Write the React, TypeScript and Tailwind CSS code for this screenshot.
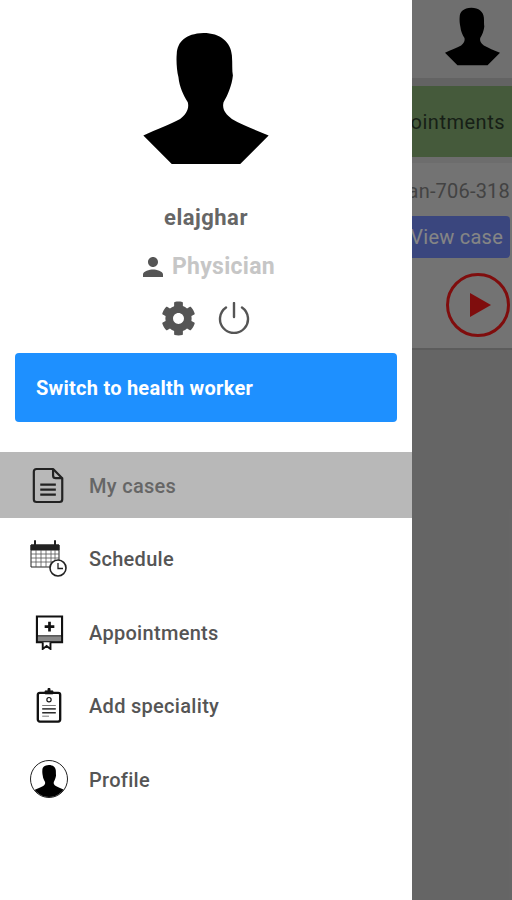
import { FaCog } from "react-icons/fa";
import { MdPerson } from "react-icons/md";

const BUST =
  "M70 345C110 325 150 312 180 295C198 282 208 265 203 245C190 225 178 200 175 170C170 150 168 120 170 100C172 65 195 40 250 38C300 38 332 65 335 105C337 130 335 150 338 165C335 195 322 225 310 245C305 265 315 280 335 295C365 312 405 328 445 345L360 430L155 430Z";

const Bust = ({ className }: { className: string }) => (
  <svg viewBox="70 38 375 392" className={className} fill="#000">
    <path d={BUST} />
  </svg>
);

const DocIcon = () => (
  <svg viewBox="0 0 36 40" className="w-[33px] h-[37px] mr-[2px]" fill="none" stroke="#222" strokeWidth="2.400">
    <path d="M5 2H23L33 12V35Q33 38 30 38H5Q2 38 2 35V5Q2 2 5 2Z" strokeLinejoin="round" />
    <path d="M23 2V9Q23 12 26 12H33" />
    <path d="M9 19H26M9 24.500H26M9 30H26" />
  </svg>
);

const CalendarIcon = () => (
  <svg viewBox="0 0 38 38" className="w-[38px] h-[38px]" fill="none" stroke="#222">
    <path d="M1 5H29V27H1Z" strokeWidth="1" />
    <path d="M1 5H29V10H1Z" fill="#222" strokeWidth="1" />
    <path d="M5 1V8M25 1V8" strokeWidth="2" strokeLinecap="round" />
    <path d="M1 14H29M1 18H29M1 22H29M6 10V27M11 10V27M16 10V27M21 10V27M25 10V27" strokeWidth="0.8" stroke="#555" />
    <circle cx="28" cy="28" r="8" fill="#fff" strokeWidth="1.600" />
    <path d="M28 23V28.500H33" strokeWidth="1.300" />
  </svg>
);

const BookIcon = () => (
  <svg viewBox="0 0 30 36" className="w-[29px] h-[35px]" fill="none" stroke="#111" strokeWidth="2.200">
    <path d="M2 1.500H28V28H2Z" />
    <path d="M3 22H27V27H3Z" fill="#888" stroke="none" />
    <path d="M2 21.500H28" strokeWidth="1.200" />
    <path d="M15 7V17M10 12H20" strokeWidth="2.800" />
    <path d="M8 28V35L12 32L16 35V28" fill="#fff" strokeWidth="2" />
  </svg>
);

const ClipboardIcon = () => (
  <svg viewBox="0 0 26 36" className="w-[26px] h-[35px]" fill="none" stroke="#111">
    <rect x="1.500" y="5" width="23" height="29.500" rx="2" strokeWidth="2.400" />
    <path d="M9 6H17V3H14V0.500H12V3H9Z" fill="#111" strokeWidth="1" />
    <circle cx="13" cy="12" r="2.200" strokeWidth="1.200" />
    <path d="M6 18H20" strokeWidth="1" stroke="#777" />
    <path d="M6 21.500H20" strokeWidth="1.400" />
    <path d="M6 25.500H20" strokeWidth="1.400" />
    <path d="M6 29H13" strokeWidth="1" stroke="#777" />
  </svg>
);

const ProfileIcon = () => (
  <div className="w-[38px] h-[38px] rounded-full border border-[#222] overflow-hidden flex justify-center">
    <Bust className="w-[31px] h-[32px] mt-[4px] shrink-0" />
  </div>
);

const MENU = [
  { label: "My cases", icon: <DocIcon />, active: true },
  { label: "Schedule", icon: <CalendarIcon /> },
  { label: "Appointments", icon: <BookIcon /> },
  { label: "Add speciality", icon: <ClipboardIcon /> },
  { label: "Profile", icon: <ProfileIcon /> },
];

export default function App() {
  return (
    <div className="relative w-[512px] h-[900px] overflow-hidden bg-[#b9b9b9] font-['Roboto',sans-serif]">
      {/* page behind the drawer */}
      <div className="h-[78px] bg-[#cacaca] flex justify-end pr-[12px] pt-[7px]">
        <Bust className="w-[55px] h-[59px]" />
      </div>
      <div className="h-[8px] bg-[#b4b4b4]" />
      <div className="h-[71px] bg-[#7ea46c] flex items-center justify-end pr-[7px]">
        <span className="text-[20px] tracking-[0.5px] text-[#2a3a2a] whitespace-nowrap">Appointments</span>
      </div>
      <div className="h-[193px] bg-[#d1d1d1] border-t-[6px] border-t-[#c6c6c6] border-b-2 border-b-[#a8a8a8] flex flex-col items-end">
        <span className="mt-[15px] mr-[2px] text-[20px] leading-[26px] tracking-[0.2px] text-[#7a7a7a] whitespace-nowrap">
          Scan-706-318
        </span>
        <div className="mt-[12px] mr-[2px] w-[140px] h-[42px] rounded-[4px] bg-[#6a80e6] flex items-center justify-end pr-[7px] text-[20px] tracking-[0.25px] text-[#f2f2f2] whitespace-nowrap">
          View case
        </div>
        <div className="mt-[15px] mr-[2px] w-[64px] h-[64px] rounded-full border-[3px] border-[#e81818] flex items-center justify-center">
          <div className="ml-[4px] w-0 h-0 border-y-[12px] border-y-transparent border-l-[21px] border-l-[#e81818]" />
        </div>
      </div>

      <div className="absolute inset-0 bg-black/45" />

      {/* drawer */}
      <div className="absolute inset-y-0 left-0 w-[412px] bg-white flex flex-col">
        <div className="flex flex-col items-center">
          <Bust className="w-[126px] h-[131px] mt-[33px]" />
          <div className="mt-[40px] text-[22px] leading-[28px] font-bold tracking-[0.5px] text-[#666]">elajghar</div>
          <div className="mt-[21px] h-[28px] flex items-center gap-[4px] ml-[1px]">
            <MdPerson size={30} color="#555" />
            <span className="text-[23px] font-bold tracking-[0.3px] text-[#c6c6c6]">Physician</span>
          </div>
          <div className="mt-[19px] flex items-center gap-[22px] h-[36px] -ml-[2px]">
            <FaCog size={35} color="#555" />
            <svg viewBox="0 0 32 32" className="w-[32px] h-[32px]" fill="none" stroke="#555" strokeWidth="2.400" strokeLinecap="round">
              <path d="M8 5.500A14 14 0 1 0 24 5.500" />
              <path d="M16 1V15" />
            </svg>
          </div>
        </div>
        <div className="mx-[15px] mt-[17px] h-[69px] rounded-[4px] bg-[#1e90ff] flex items-center px-[21px] text-[20px] tracking-[0.25px] font-bold text-white">
          Switch to health worker
        </div>
        <div className="mt-[30px] flex flex-col gap-[7.500px]">
          {MENU.map((item) => (
            <div
              key={item.label}
              className={`h-[66px] flex items-center ${item.active ? "bg-[#b8b8b8]" : ""}`}
            >
              <div className="w-[89px] pl-[29px] pr-[20px] flex justify-center shrink-0">{item.icon}</div>
              <span className={`mt-[1px] text-[20px] font-medium tracking-[0.3px] ${item.active ? "text-[#666]" : "text-[#555]"}`}>
                {item.label}
              </span>
            </div>
          ))}
        </div>
      </div>
    </div>
  );
}
